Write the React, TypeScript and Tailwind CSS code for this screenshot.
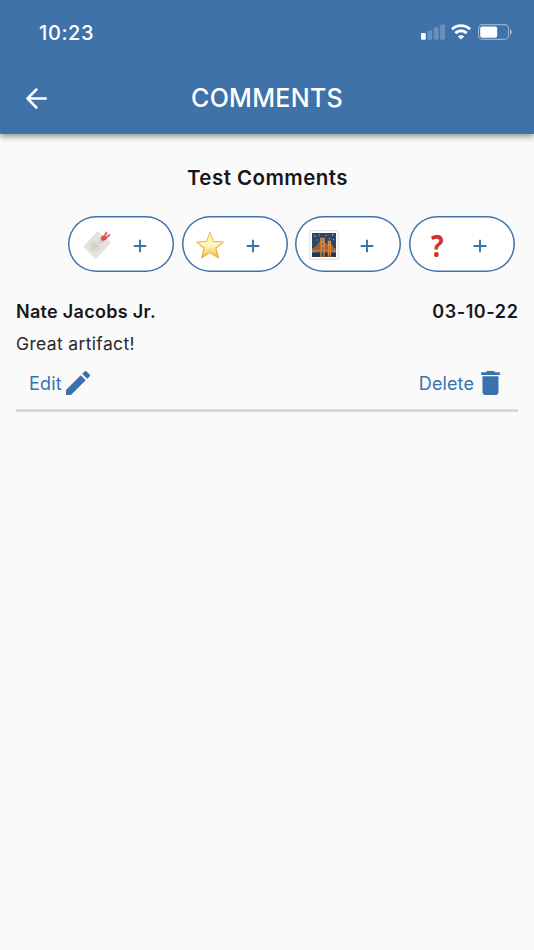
import type { ReactNode } from 'react'

function SignalIcon() {
  return (
    <svg className="h-4 w-6" viewBox="0 0 24 16" fill="white">
      <rect x="0" y="9" width="4.8" height="6.8" rx="1.2" />
      <g opacity="0.22">
        <rect x="6.4" y="6.5" width="4.8" height="9.3" rx="1.2" />
        <rect x="12.8" y="3.6" width="4.8" height="12.2" rx="1.2" />
        <rect x="19.2" y="0.6" width="4.8" height="15.2" rx="1.2" />
      </g>
    </svg>
  )
}

function WifiIcon() {
  return (
    <svg className="ml-1.5 h-4 w-5" viewBox="0 0 20 16" fill="none" stroke="white" strokeWidth="2.9">
      <path d="M0.9 5.3C6 0.4 14 0.4 19.1 5.3" />
      <path d="M4.3 9.1C7.5 6 12.5 6 15.7 9.1" />
      <path d="M10 15.6L6.8 12.4C8.6 10.8 11.4 10.8 13.2 12.4Z" fill="white" stroke="none" />
    </svg>
  )
}

function BatteryIcon() {
  return (
    <svg className="ml-[7px] h-4 w-[34px]" viewBox="0 0 34 16" fill="none">
      <rect x="0.6" y="0.6" width="30" height="14.8" rx="4" stroke="white" strokeOpacity="0.45" strokeWidth="1.1" />
      <rect x="2.2" y="2.5" width="17" height="11.2" rx="2" fill="white" />
      <path d="M32 5.2C34.4 6.4 34.4 9.8 32 11Z" fill="white" fillOpacity="0.5" />
    </svg>
  )
}

function TagIcon() {
  const rays = [0, 30, 60, 90, 120, 150]

  return (
    <svg className="size-7 overflow-visible" viewBox="0 0 28 28">
      <path d="M0.3 15.2L13.5 1.2Q14.5 0.2 15.7 1L27.3 10.8Q28 11.8 27.2 12.7L13.5 27.2Q12.5 28 11.5 27Z" fill="#e5e2dd" />
      <g stroke="#d0cdc5" strokeWidth="0.8">
        {rays.map((angle) => (
          <path key={angle} d="M5.8 15.5H17.8" transform={`rotate(${angle} 11.8 15.5)`} />
        ))}
      </g>
      <circle cx="11.8" cy="15.5" r="2.2" fill="#d3cfc8" />
      <circle cx="18.4" cy="9.5" r="2.5" fill="#cfd2cf" />
      <path d="M21 6.2L23.4 1.6M22.2 7.6L26.4 4" stroke="#e4686a" strokeWidth="2.1" strokeLinecap="round" />
      <path d="M18.4 5.4Q20.2 3.8 22.7 5.4L23.8 7.5Q21.8 10.4 19.4 9.7Q17 8.6 18.4 5.4Z" fill="#dc5054" />
    </svg>
  )
}

function StarIcon() {
  return (
    <svg className="size-7 overflow-visible" viewBox="0 0 28 28">
      <defs>
        <linearGradient id="star-fill" x1="0" y1="0" x2="0" y2="1">
          <stop offset="0" stopColor="#ffeb9b" />
          <stop offset="0.5" stopColor="#fff7c0" />
          <stop offset="1" stopColor="#f3bd38" />
        </linearGradient>
        <linearGradient id="star-edge" x1="0" y1="0" x2="0" y2="1">
          <stop offset="0" stopColor="#ecca70" />
          <stop offset="1" stopColor="#e0aa46" />
        </linearGradient>
      </defs>
      <path
        d="M14 1.2L17.6 10.4L27.4 11L19.8 17.2L22.5 26.9L14 21.6L5.5 26.9L8.2 17.2L0.6 11L10.4 10.4Z"
        fill="url(#star-fill)"
        stroke="url(#star-edge)"
        strokeWidth="1.1"
        strokeLinejoin="round"
      />
    </svg>
  )
}

function BridgeIcon() {
  return (
    <svg className="size-[30px]" viewBox="0 0 30 30">
      <rect x="0.8" y="0.8" width="28.4" height="28.4" rx="0.6" fill="white" stroke="#d8d9da" strokeWidth="1" />
      <rect x="3" y="3" width="24" height="24" fill="#2b4766" />
      <rect x="3" y="20" width="24" height="3.4" fill="#315a82" />
      <path d="M3 23.2H27V27H3Z" fill="#263548" />
      <g fill="#e5c98c">
        <circle cx="6" cy="6" r="0.7" />
        <circle cx="10.5" cy="5" r="0.6" />
        <circle cx="17" cy="5.4" r="0.6" />
        <circle cx="23.7" cy="4.8" r="0.7" />
        <circle cx="24.4" cy="9.5" r="0.6" />
        <circle cx="8" cy="10" r="0.6" />
        <circle cx="20.5" cy="8.6" r="0.6" />
      </g>
      <path d="M3 20Q10 17 13 9L15 9Q17 16 19.4 16V11.5H21.4Q23 18 27 19.5V21.5H3Z" fill="#a9683d" opacity="0.8" />
      <path d="M3 19.5Q10 16 13 8Q16 17 18.5 14.8Q20 13.5 20.5 11.5Q22.5 18 27 19.5" fill="none" stroke="#d48136" strokeWidth="0.9" />
      <path d="M12 26.5V8.3H15V26.5M12 12H15M12 16H15M19.4 26V11.5H21.4V26M19.4 15H21.4" fill="none" stroke="#e58a3a" strokeWidth="1.3" />
      <path d="M3 21.4L13 20L27 21.5" fill="none" stroke="#d87a34" strokeWidth="1.6" />
      <path d="M10.8 26.4H16.2M18.4 26.4H22.4" stroke="#9a603c" strokeWidth="1.1" />
    </svg>
  )
}

function ReactionButton({ label, children }: { label: string; children: ReactNode }) {
  return (
    <button
      aria-label={label}
      className="flex h-14 w-[106px] items-center rounded-full bg-white pl-[13.5px] text-[#3972ad] shadow-[inset_0_0_0_1.5px_#3f72a9]"
    >
      <span className="mt-px flex w-[30px] items-center justify-center">{children}</span>
      <svg className="mt-1 ml-[21px] size-3.5" viewBox="0 0 14 14" stroke="currentColor" strokeWidth="1.9">
        <path d="M7 0.7V13.3M0.7 7H13.3" />
      </svg>
    </button>
  )
}

export default function App() {
  return (
    <div className="min-h-[950px] w-[534px] bg-[#fafafa] font-['Inter','Liberation_Sans',sans-serif] text-[#18181a]">
      <header className="h-[134px] bg-[#3f72a9] text-white shadow-[0_3px_6px_rgba(0,0,0,0.38)]">
        <div className="flex h-16 items-center justify-between pr-[22px] pl-[39px]">
          <span className="pt-px text-[20px] font-medium tracking-[0.6px]">10:23</span>
          <div className="flex items-center">
            <SignalIcon />
            <WifiIcon />
            <BatteryIcon />
          </div>
        </div>
        <div className="grid h-[68px] grid-cols-[1fr_auto_1fr] items-center">
          <button aria-label="Back" className="ml-[26px] w-fit">
            <svg className="size-[21px]" viewBox="0 0 21 21" fill="none" stroke="white" strokeWidth="2.5" strokeLinecap="round" strokeLinejoin="round">
              <path d="M10.4 1.5L1.5 10.5L10.4 19.5M1.5 10.5H19.7" />
            </svg>
          </button>
          <h1 className="pt-0.5 text-[25px] font-medium tracking-[0.3px]">COMMENTS</h1>
        </div>
      </header>

      <main className="px-4 pt-[30px]">
        <h2 className="pl-px text-center text-[20.5px] leading-7 font-semibold tracking-[0.45px]">Test Comments</h2>

        <div className="mt-6 mr-[3.5px] flex justify-end gap-[7.5px]">
          <ReactionButton label="Tag">
            <TagIcon />
          </ReactionButton>
          <ReactionButton label="Star">
            <StarIcon />
          </ReactionButton>
          <ReactionButton label="Landmark">
            <BridgeIcon />
          </ReactionButton>
          <ReactionButton label="Question">
            <span className="inline-block scale-x-[0.85] font-['Open_Sans','Noto_Sans',sans-serif] text-[31px] leading-7 font-bold text-[#d4302b]">
              ?
            </span>
          </ReactionButton>
        </div>

        <article className="mt-7 border-b-[3px] border-[#d9d9d9] text-[18px]">
          <div className="flex justify-between leading-6 font-semibold">
            <h3 className="tracking-[0.3px]">Nate Jacobs Jr.</h3>
            <time className="-mr-[0.5px] tracking-[0.6px]">03-10-22</time>
          </div>
          <p className="mt-2 text-[17.5px] leading-6 tracking-[0.35px] text-[#29292b]">Great artifact!</p>
          <div className="mt-[13px] flex h-10 justify-between pr-[18px] pl-[13px] text-[#3972ad]">
            <button className="flex h-7 items-center gap-1">
              <span className="tracking-[0.2px]">Edit</span>
              <svg className="size-6" viewBox="3 3 18 18" fill="currentColor">
                <path d="M3 17.25V21h3.75L17.81 9.94l-3.75-3.75L3 17.25zM20.71 7.04a.996.996 0 0 0 0-1.41l-2.34-2.34a.996.996 0 0 0-1.41 0l-1.83 1.83 3.75 3.75 1.83-1.83z" />
              </svg>
            </button>
            <button className="flex h-7 items-center gap-[7px]">
              <span className="tracking-[0.1px]">Delete</span>
              <svg className="h-6 w-[19px]" viewBox="5 3 14 18" fill="currentColor">
                <path d="M6 19c0 1.1.9 2 2 2h8c1.1 0 2-.9 2-2V7H6v12zM19 4h-3.5l-1-1h-5l-1 1H5v2h14V4z" />
              </svg>
            </button>
          </div>
        </article>
      </main>
    </div>
  )
}
